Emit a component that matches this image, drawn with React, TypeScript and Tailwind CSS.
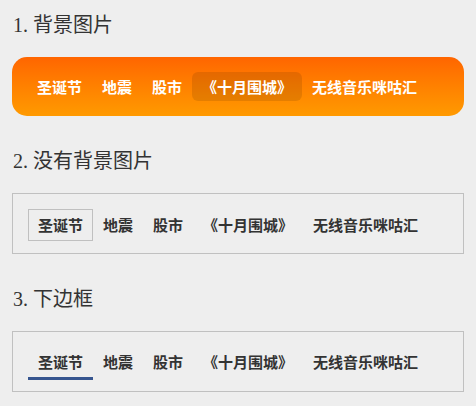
const tabs = ['圣诞节', '地震', '股市', '《十月围城》', '无线音乐咪咕汇'];

const cjk = 'font-["Noto_Sans_CJK_SC",sans-serif]';

function Heading({ children }: { children: React.ReactNode }) {
  return (
    <h2 className='mb-[18px] pl-[1px] font-["Liberation_Serif","Noto_Sans_CJK_SC",serif] text-[20px] leading-[28px] text-[#333]'>
      {children}
    </h2>
  );
}

// 1. orange gradient bar, current tab as a translucent pill
function BgTabs({ active }: { active: number }) {
  return (
    <ul className={`flex h-[59px] items-start rounded-[15px] bg-gradient-to-b from-[#ff6500] to-[#ff9a00] pl-[15px] pt-[15px] ${cjk}`}>
      {tabs.map((t, i) => (
        <li
          key={t}
          className={`flex h-[29px] items-center rounded-[6px] px-[10px] pt-[2px] text-[15px] font-bold text-white ${
            i === active ? 'bg-black/10' : ''
          }`}
        >
          {t}
        </li>
      ))}
    </ul>
  );
}

// 2. plain box, current tab outlined
function PlainTabs({ active }: { active: number }) {
  return (
    <ul className={`flex h-[61px] items-start border border-[#c0c0c0] pl-[15px] pt-[15px] ${cjk}`}>
      {tabs.map((t, i) => (
        <li
          key={t}
          className={`flex h-[32px] items-center border px-[9px] pt-[1px] text-[15px] font-bold text-[#333] ${
            i === active ? 'border-[#c0c0c0]' : 'border-transparent'
          }`}
        >
          {t}
        </li>
      ))}
    </ul>
  );
}

// 3. current tab marked by a bottom border
function UnderlineTabs({ active }: { active: number }) {
  return (
    <ul className={`flex h-[61px] items-start border border-[#c0c0c0] pl-[15px] pt-[15px] ${cjk}`}>
      {tabs.map((t, i) => (
        <li
          key={t}
          className={`flex h-[33px] items-center border-b-[3px] px-[10px] text-[15px] font-bold text-[#333] ${
            i === active ? 'border-[#36558f]' : 'border-transparent'
          }`}
        >
          {t}
        </li>
      ))}
    </ul>
  );
}

export default function App() {
  return (
    <div className="min-h-screen bg-[#eeeeee] px-[12px] pt-[11px]">
      <section>
        <Heading>1. 背景图片</Heading>
        <BgTabs active={3} />
      </section>
      <section className="mt-[31px]">
        <Heading>2. 没有背景图片</Heading>
        <PlainTabs active={0} />
      </section>
      <section className="mt-[31px]">
        <Heading>3. 下边框</Heading>
        <UnderlineTabs active={0} />
      </section>
    </div>
  );
}
